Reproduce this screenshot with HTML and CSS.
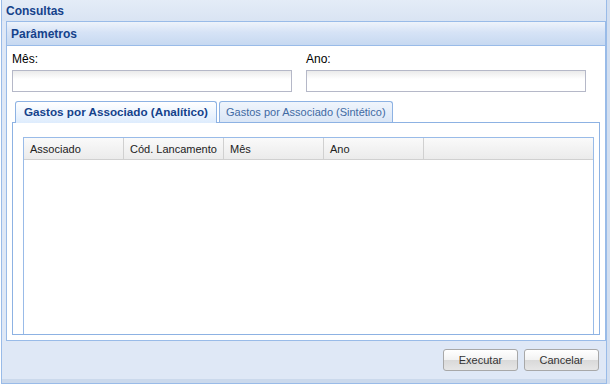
FILE: index.html
```html
<!doctype html>
<html lang="pt">
<head>
    <meta charset="UTF-8">
    <title>Consultas</title>
    <link rel="stylesheet" href="styles.css">
</head>
<body>
<div class="window">
    <div class="winHeader">Consultas</div>
    <div class="panel">
        <div class="panelHeader">Parâmetros</div>
        <div class="panelBody">
            <div class="fields">
                <div class="field">
                    <label>Mês:</label>
                    <input type="text">
                </div>
                <div class="field">
                    <label>Ano:</label>
                    <input type="text">
                </div>
            </div>
            <div class="tabs">
                <div class="tabStrip">
                    <span class="tab current">Gastos por Associado (Analítico)</span>
                    <span class="tab">Gastos por Associado (Sintético)</span>
                </div>
                <div class="tabBody">
                    <div class="grid">
                        <div class="gridHeader">
                            <div class="col">Associado</div>
                            <div class="col">Cód. Lancamento</div>
                            <div class="col">Mês</div>
                            <div class="col">Ano</div>
                            <div class="col last"></div>
                        </div>
                    </div>
                </div>
            </div>
        </div>
    </div>
    <div class="toolbar">
        <button class="btn">Executar</button>
        <button class="btn">Cancelar</button>
    </div>
    <div class="winFooter"></div>
</div>
</body>
</html>
```

FILE: styles.css
```css
* {
    margin: 0;
    padding: 0;
    box-sizing: border-box;
}

html, body {
    height: 100%;
}

body {
    background: #fff;
    font-family: "Liberation Sans", Arial, sans-serif;
    font-size: 11px;
    color: #222;
}

.window {
    width: 606px;
    margin-left: 1px;
    border-left: 1px solid #99bbe8;
    border-right: 1px solid #99bbe8;
    border-bottom: 1px solid #99bbe8;
    background: #dfe8f6;
    box-shadow: 4px 0 0 #d3dff0;
}

.winHeader {
    height: 21px;
    line-height: 22px;
    padding-left: 4px;
    font-size: 12px;
    font-weight: bold;
    color: #15428b;
    background: linear-gradient(#e4ecf7, #d9e4f3);
}

.panel {
    margin-left: 4px;
    border: 1px solid #99bbe8;
    background: #fff;
}

.panelHeader {
    height: 24px;
    line-height: 24px;
    padding-left: 4px;
    font-size: 12px;
    font-weight: bold;
    color: #15428b;
    border-bottom: 1px solid #99bbe8;
    background: linear-gradient(#eef3fb, #d6e3f6 45%, #c7d9f1);
}

.panelBody {
    padding: 5px;
}

.fields {
    display: flex;
}

.field {
    width: 294px;
}

.field label {
    display: block;
    font-size: 12px;
    line-height: 16px;
    height: 16px;
    margin-bottom: 3px;
    color: #000;
}

.field input {
    display: block;
    width: 280px;
    height: 22px;
    border: 1px solid #b5b8c8;
    background: linear-gradient(#ebebeb, #fff 8px);
    outline: none;
}

.tabs {
    margin-top: 8px;
}

.tabStrip {
    display: flex;
    align-items: flex-end;
    height: 23px;
    padding-left: 3px;
    border-bottom: 1px solid #8db2e3;
}

.tab {
    height: 21px;
    line-height: 20px;
    padding: 0 6px;
    margin-right: 2px;
    border: 1px solid #8db2e3;
    border-bottom: none;
    border-radius: 3px 3px 0 0;
    color: #416aa3;
    background: linear-gradient(#f0f5fc, #dae6f6);
}

.tab.current {
    height: 22px;
    margin-bottom: -1px;
    padding: 0 8px;
    font-size: 11.7px;
    font-weight: bold;
    color: #15428b;
    background: linear-gradient(#fff, #deecfd);
}

.tabBody {
    height: 212px;
    padding: 14px 5px 0 10px;
    border: 1px solid #8db2e3;
    border-top: none;
}

.grid {
    height: 197px;
    border: 1px solid #99bbe8;
    border-bottom: none;
}

.gridHeader {
    display: flex;
    height: 22px;
    border-bottom: 1px solid #d0d0d0;
    background: linear-gradient(#fafafa, #ebebeb);
}

.gridHeader .col {
    width: 100px;
    line-height: 22px;
    padding-left: 6px;
    border-right: 1px solid #d0d0d0;
    color: #222;
}

.gridHeader .col.last {
    flex: 1;
    border-right: none;
}

.toolbar {
    display: flex;
    justify-content: flex-end;
    gap: 6px;
    height: 38px;
    padding: 8px 7px 0 0;
}

.btn {
    width: 75px;
    height: 22px;
    font-family: "Liberation Sans", Arial, sans-serif;
    font-size: 11px;
    color: #333;
    border: 1px solid #a8a8a8;
    border-radius: 3px;
    background: linear-gradient(#fff, #f2f2f2 50%, #d9d9d9 51%, #e6e6e6);
}

.winFooter {
    height: 4px;
    background: #cbd9ec;
}
```
